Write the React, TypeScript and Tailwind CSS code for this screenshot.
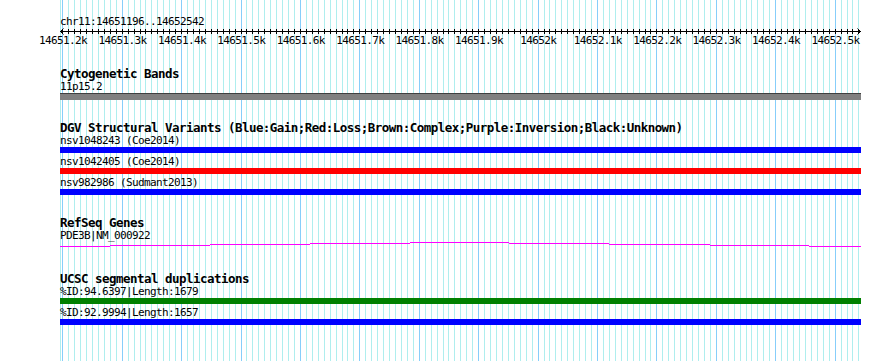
import React from "react";

const X = (bp: number) => 62.3 + (bp - 14651200) * 0.5941;

const gridBps: number[] = [];
for (let bp = 14651200; bp <= 14652540; bp += 10) gridBps.push(bp);
const labelBps: number[] = [];
for (let i = 2; i <= 15; i++) labelBps.push(14651000 + i * 100);

const mono = "font-['DejaVu_Sans_Mono',monospace]";

function Title({ children }: { children: React.ReactNode }) {
  return (
    <div className="h-[14px] pl-[60px] text-[12.5px] leading-[13.4px] tracking-[-0.53px] font-bold whitespace-nowrap text-black">
      {children}
    </div>
  );
}

function Label({ children }: { children: React.ReactNode }) {
  return (
    <div className="h-[12px] pl-[60px] text-[11px] leading-[12px] tracking-[-0.62px] whitespace-nowrap text-black">
      {children}
    </div>
  );
}

function Bar({ color, gap = true }: { color: string; gap?: boolean }) {
  return <div className={`ml-[60px] w-[801px] h-[6px] ${color} ${gap ? "mb-[3px]" : ""}`} />;
}

const geneSegs: [number, number, number][] = [
  [60, 110, 246],
  [110, 210, 245],
  [210, 310, 244],
  [310, 410, 243],
  [410, 509, 242],
  [509, 609, 243],
  [609, 710, 244],
  [710, 809, 245],
  [809, 861, 246],
];

export default function App() {
  return (
    <div className={`relative w-[890px] h-[361px] bg-white overflow-hidden ${mono}`}>
      <svg
        className="absolute inset-0"
        width={890}
        height={361}
        shapeRendering="crispEdges"
      >
        <rect x={60} y={0} width={1} height={361} fill="#afeeee" />
        {gridBps.map((bp) => (
          <rect
            key={bp}
            x={Math.round(X(bp))}
            y={0}
            width={1}
            height={361}
            fill={bp % 100 === 0 ? "#87cefa" : "#afeeee"}
          />
        ))}
      </svg>

      <div className="relative flex flex-col pt-[16px]">
        <div className="h-[11px] pl-[60px] text-[11px] leading-[12px] tracking-[-0.62px] whitespace-nowrap text-black">
          chr11:14651196..14652542
        </div>
        <svg width={890} height={20} className="block">
          <rect x={60} y={4} width={801} height={1} fill="#000" shapeRendering="crispEdges" />
          {gridBps.map((bp) => (
            <rect
              key={bp}
              x={Math.round(X(bp))}
              y={2}
              width={1}
              height={5}
              fill="#000"
              shapeRendering="crispEdges"
            />
          ))}
          <polyline points="63.5,1.5 60.5,4.5 63.5,7.5" fill="none" stroke="#000" strokeWidth={1} />
          <polyline points="857.5,1.5 860.5,4.5 857.5,7.5" fill="none" stroke="#000" strokeWidth={1} />
          {labelBps.map((bp) => (
            <text
              key={bp}
              x={X(bp) + 0.8}
              y={17}
              textAnchor="middle"
              fontSize={11}
              letterSpacing={-0.62}
              fontFamily="'DejaVu Sans Mono', monospace"
              fill="#000"
            >
              {`${bp / 1000}k`}
            </text>
          ))}
        </svg>

        <div className="mt-[20px]">
          <Title>Cytogenetic Bands</Title>
          <Label>11p15.2</Label>
          <div className="ml-[60px] w-[801px] h-[7px] bg-[#808080] border-t border-[#404040]" />
        </div>

        <div className="mt-[21px]">
          <Title>DGV Structural Variants (Blue:Gain;Red:Loss;Brown:Complex;Purple:Inversion;Black:Unknown)</Title>
          <Label>nsv1048243 (Coe2014)</Label>
          <Bar color="bg-[#0000ff]" />
          <Label>nsv1042405 (Coe2014)</Label>
          <Bar color="bg-[#ff0000]" />
          <Label>nsv982986 (Sudmant2013)</Label>
          <Bar color="bg-[#0000ff]" gap={false} />
        </div>

        <div className="mt-[21px]">
          <Title>RefSeq Genes</Title>
          <Label>PDE3B|NM_000922</Label>
          <svg width={890} height={6} className="block" shapeRendering="crispEdges">
            {geneSegs.map(([a, b, y]) => (
              <rect key={a} x={a} y={y - 242} width={b - a} height={1} fill="#ff00ff" />
            ))}
          </svg>
        </div>

        <div className="mt-[24px]">
          <Title>UCSC segmental duplications</Title>
          <Label>%ID:94.6397|Length:1679</Label>
          <Bar color="bg-[#008000]" />
          <Label>%ID:92.9994|Length:1657</Label>
          <Bar color="bg-[#0000ff]" gap={false} />
        </div>
      </div>
    </div>
  );
}
